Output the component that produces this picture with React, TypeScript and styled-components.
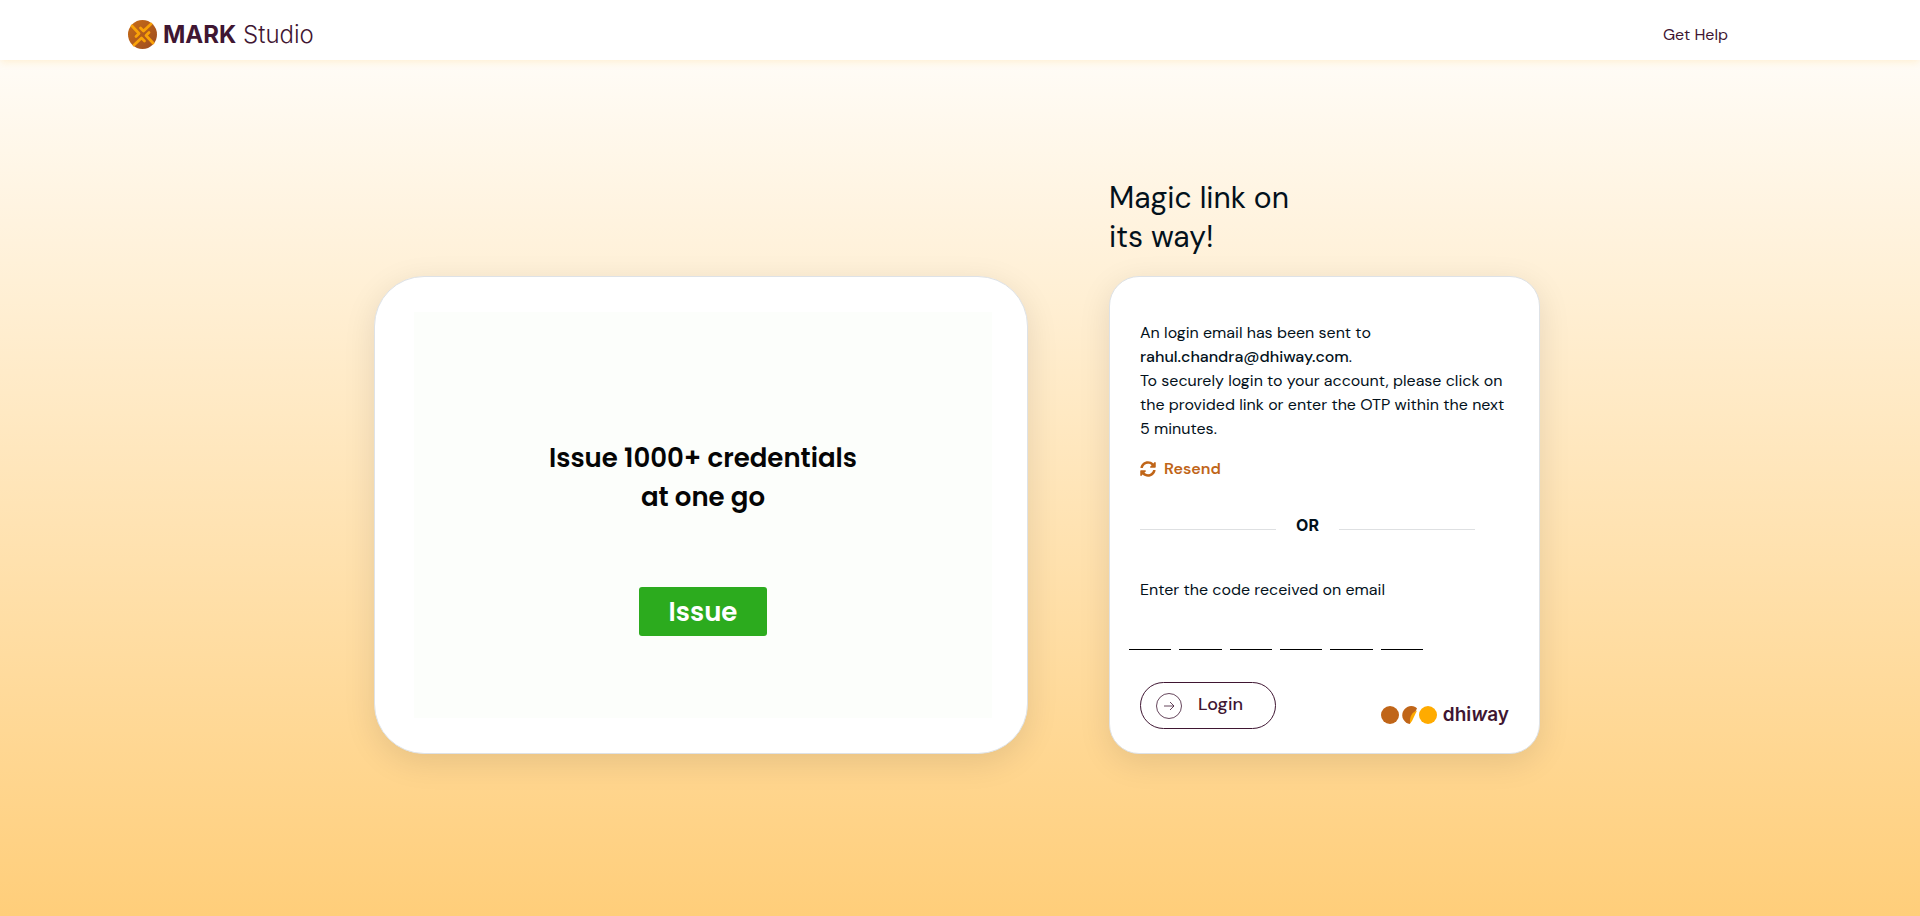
import React from 'react';
import styled, { createGlobalStyle } from 'styled-components';
import { FaSyncAlt } from 'react-icons/fa';

const plum = '#3f1632';
const ink = '#03111b';
const rust = '#c06518';
const amber = '#ffab00';

const GlobalStyle = createGlobalStyle`
  *, *::before, *::after { box-sizing: border-box; }
  body {
    margin: 0;
    font-family: "DM Sans", Inter, "Liberation Sans", sans-serif;
    font-size: 16px;
    line-height: 24px;
    color: ${ink};
  }
  h1, p { margin: 0; }
`;

const Page = styled.div`
  min-height: 100vh;
  display: flex;
  flex-direction: column;
  background: linear-gradient(#ffffff, #ffce7a);
`;

const Header = styled.header`
  height: 60px;
  flex: none;
  display: flex;
  align-items: center;
  justify-content: space-between;
  padding: 9px 10% 0 128px;
  background: #fff;
  box-shadow: 0 2px 8px rgba(255, 171, 0, 0.15);
`;

const Brand = styled.a`
  display: flex;
  align-items: center;
  gap: 5px;
  color: ${plum};
  font-family: Inter, "Liberation Sans", sans-serif;
  font-size: 24px;
  font-weight: 300;
  text-decoration: none;
  b { font-weight: 700; }
`;

const HelpLink = styled.a`
  color: ${plum};
  text-decoration: none;
`;

const Main = styled.main`
  width: 100%;
  max-width: 1172px;
  margin: 0 auto;
  padding: 118px 6px 48px 0;
  display: grid;
  grid-template-columns: 654fr 431fr;
  column-gap: 81px;
  row-gap: 20px;
`;

const Title = styled.h1`
  grid-column: 2;
  font-size: 30px;
  line-height: 39px;
  font-weight: 400;
`;

const Card = styled.section<{ $radius: number }>`
  display: flex;
  flex-direction: column;
  background: #fff;
  border: 1px solid #dee2e6;
  border-radius: ${(p) => p.$radius}px;
  box-shadow: 0 8px 32px rgba(0, 0, 0, 0.1);
`;

const PromoCard = styled(Card)`
  grid-column: 1;
  padding: 35px;
  padding-left: 39px;
`;

const Promo = styled.div`
  flex: 1;
  display: flex;
  flex-direction: column;
  align-items: center;
  justify-content: center;
  gap: 70px;
  padding-top: 44px;
  background: #fcfefb;
`;

const PromoText = styled.p`
  font-family: Poppins, Inter, sans-serif;
  font-size: 26px;
  line-height: 39px;
  font-weight: 600;
  color: #050505;
  text-align: center;
`;

const IssueButton = styled.button`
  width: 128px;
  height: 49px;
  padding: 0;
  border: 0;
  border-radius: 3px;
  background: #2cab1e;
  color: #fff;
  font: 600 26px/50px Poppins, Inter, sans-serif;
`;

const LoginCard = styled(Card)`
  padding: 44px 30px 24px;
`;

const Email = styled.strong`
  font-weight: 500;
`;

const ResendButton = styled.button`
  align-self: flex-start;
  display: flex;
  align-items: center;
  gap: 8px;
  margin-top: 16px;
  padding: 0;
  border: 0;
  background: none;
  color: ${rust};
  font: inherit;
  font-weight: 600;
`;

const Divider = styled.div`
  width: 335px;
  max-width: 100%;
  display: flex;
  align-items: center;
  gap: 20px;
  margin-top: 32px;
  font: 700 16px/24px Inter, sans-serif;
  &::before, &::after {
    content: "";
    flex: 1;
    height: 1px;
    margin-top: 8px;
    background: #dee0e2;
  }
`;

const CodeField = styled.fieldset`
  margin: 41px 0 0;
  padding: 0;
  border: 0;
  legend { padding: 0; }
`;

const CodeRow = styled.div`
  width: 294px;
  display: grid;
  grid-template-columns: repeat(6, 1fr);
  gap: 8px;
  margin: 16px 0 0 -11px;
`;

const Digit = styled.input`
  width: 100%;
  min-width: 0;
  height: 32px;
  padding: 0;
  border: 0;
  border-bottom: 1px solid #000;
  border-radius: 0;
  background: none;
  text-align: center;
  font: inherit;
  outline: none;
`;

const Actions = styled.div`
  display: flex;
  align-items: center;
  justify-content: space-between;
  margin-top: 32px;
`;

const LoginButton = styled.button`
  width: 136px;
  height: 47px;
  display: flex;
  align-items: center;
  gap: 16px;
  padding: 0 15px;
  border: 1px solid ${plum};
  border-radius: 24px;
  background: none;
  color: ${plum};
  font: inherit;
  font-size: 18px;
  font-weight: 500;
`;

const LoginLabel = styled.span`
  padding-bottom: 3px;
`;

const Vendor = styled.a`
  display: flex;
  align-items: center;
  gap: 5px;
  margin-top: 18px;
  color: ${plum};
  font-family: Inter, "Liberation Sans", sans-serif;
  font-size: 19px;
  font-weight: 600;
  text-decoration: none;
`;

const MarkLogo = () => (
  <svg width="30" height="30" viewBox="0 0 30 30" fill="none" aria-hidden="true">
    <defs>
      <linearGradient id="disc" x1="0" y1="0" x2="1" y2="1">
        <stop offset="0" stopColor="#c96d16" />
        <stop offset="1" stopColor="#9c4b20" />
      </linearGradient>
    </defs>
    <circle cx="14.5" cy="14.5" r="14.5" fill="url(#disc)" />
    <g stroke="#f9a208" strokeWidth="2.8" strokeLinejoin="round" strokeLinecap="round">
      {[0, 90, 180, 270].map((turn) => (
        <path key={turn} d="M23 4L15.5 11L12.5 8" transform={`rotate(${turn} 14.5 14.5)`} />
      ))}
    </g>
  </svg>
);

const ArrowCircle = () => (
  <svg width="26" height="26" viewBox="0 0 26 26" fill="none" stroke={plum} strokeWidth="0.8" aria-hidden="true">
    <circle cx="13" cy="13" r="12.5" />
    <path d="M8 13h10M14 9l4 4-4 4" />
  </svg>
);

const DhiwayDots = () => (
  <svg width="57" height="18" viewBox="0 0 57 18" aria-hidden="true">
    <circle cx="9" cy="9" r="9" fill={rust} />
    <path d="M36 2.2A9 9 0 1 0 28.8 18z" fill={rust} />
    <path d="M36 4.5C31 6.5 28.5 10 29 17.5L31 15z" fill={amber} />
    <circle cx="47" cy="9" r="9" fill={amber} />
  </svg>
);

export default function App() {
  return (
    <>
      <GlobalStyle />
      <Page>
        <Header>
          <Brand href="#">
            <MarkLogo />
            <span><b>MARK</b> Studio</span>
          </Brand>
          <HelpLink href="#">Get Help</HelpLink>
        </Header>
        <Main>
          <Title>Magic link on<br />its way!</Title>
          <PromoCard $radius={50}>
            <Promo>
              <PromoText>Issue 1000+ credentials<br />at one go</PromoText>
              <IssueButton type="button">Issue</IssueButton>
            </Promo>
          </PromoCard>
          <LoginCard $radius={30}>
            <p>
              An login email has been sent to<br />
              <Email>rahul.chandra@dhiway.com</Email>.
            </p>
            <p>To securely login to your account, please click on the provided link or enter the OTP within the next 5 minutes.</p>
            <ResendButton type="button"><FaSyncAlt size={16} />Resend</ResendButton>
            <Divider>OR</Divider>
            <CodeField>
              <legend>Enter the code received on email</legend>
              <CodeRow>
                {[1, 2, 3, 4, 5, 6].map((n) => (
                  <Digit key={n} aria-label={`Digit ${n}`} maxLength={1} inputMode="numeric" />
                ))}
              </CodeRow>
            </CodeField>
            <Actions>
              <LoginButton type="button"><ArrowCircle /><LoginLabel>Login</LoginLabel></LoginButton>
              <Vendor href="#"><DhiwayDots /><span>dhi<i>w</i>ay</span></Vendor>
            </Actions>
          </LoginCard>
        </Main>
      </Page>
    </>
  );
}
